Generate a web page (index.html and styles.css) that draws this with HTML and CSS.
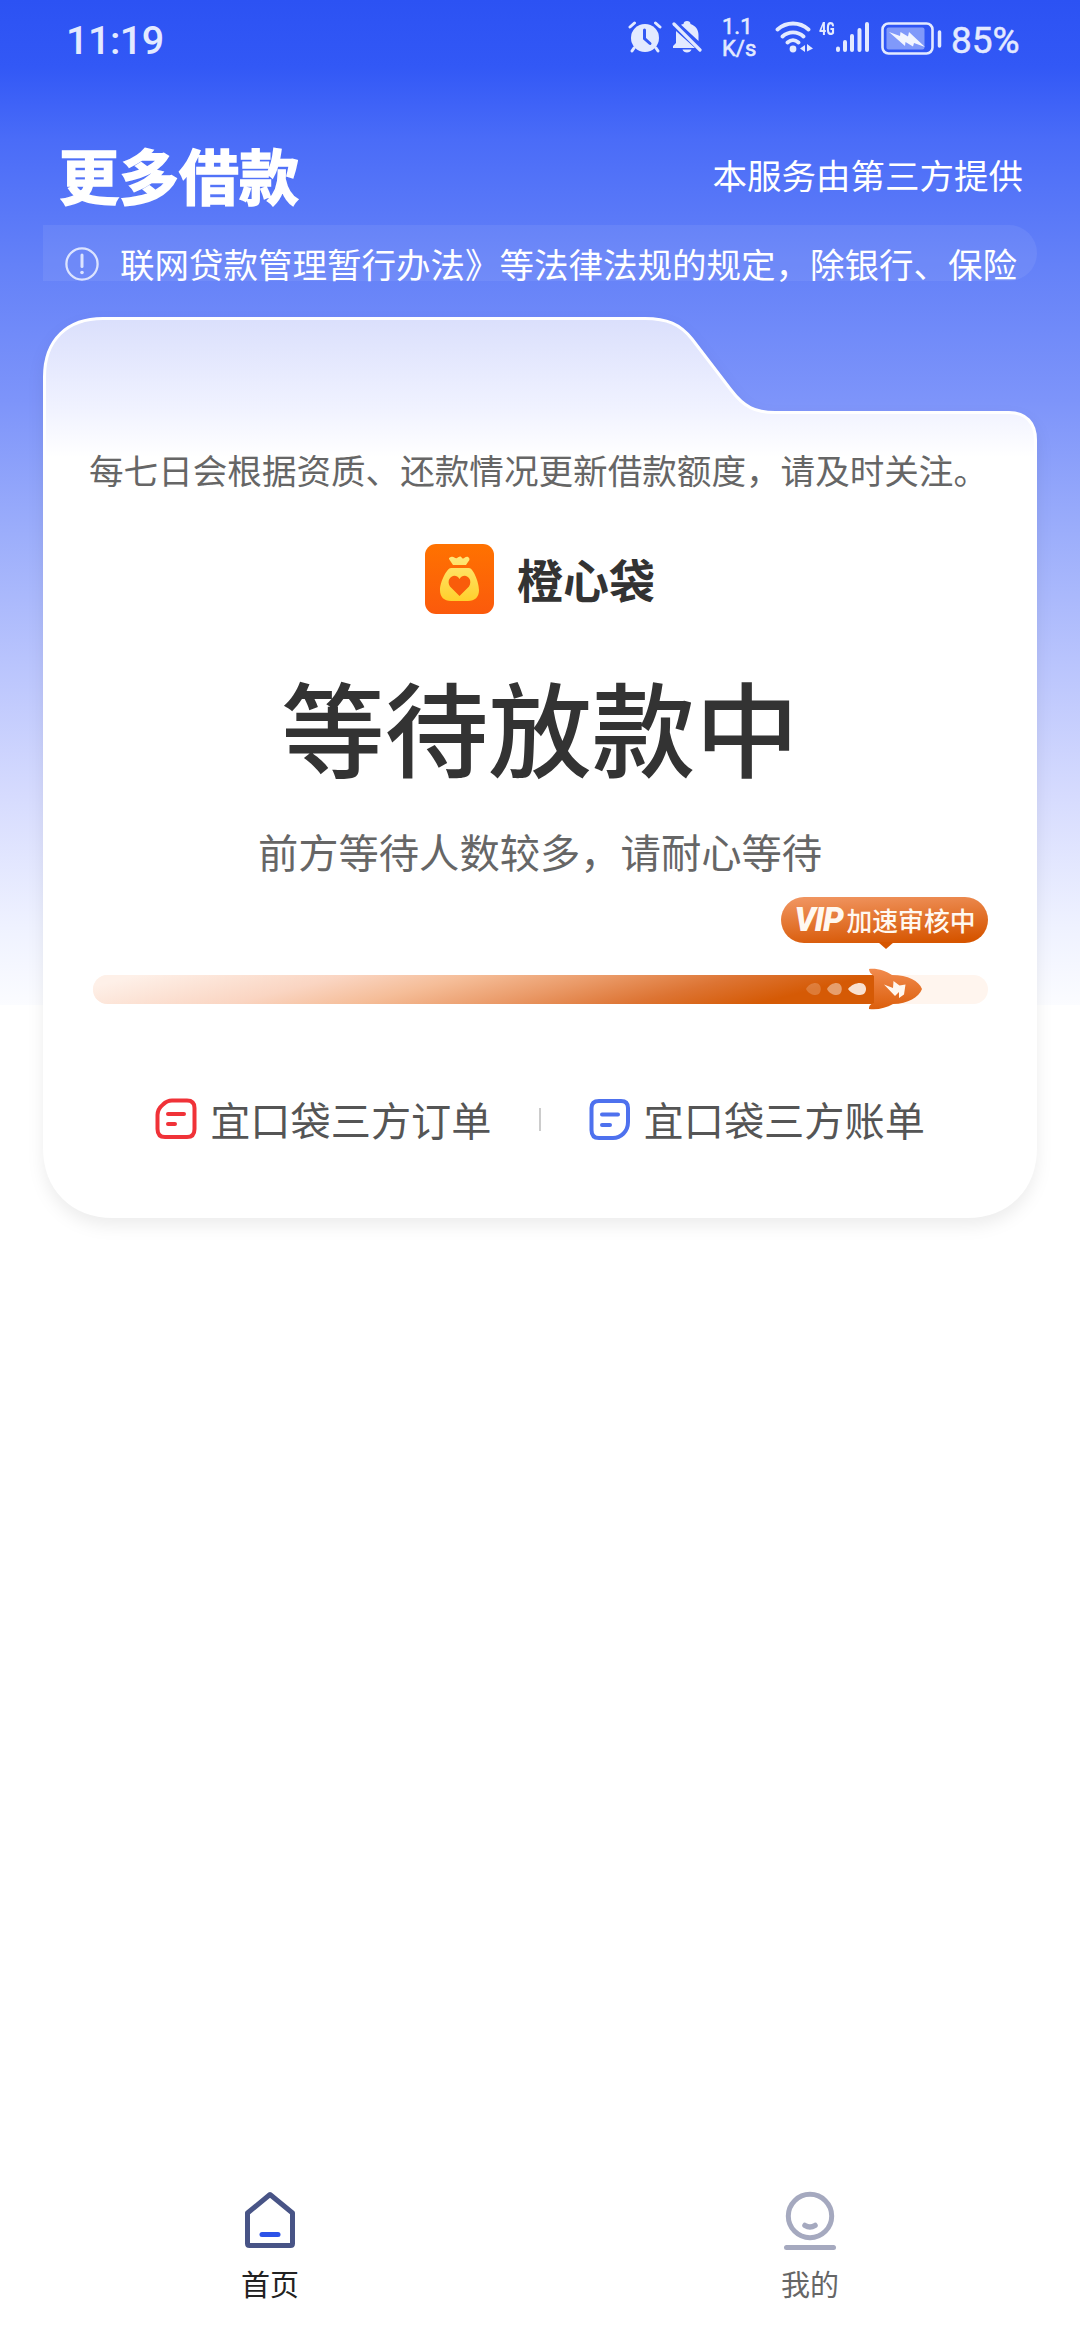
FILE: index.html
```
<!DOCTYPE html>
<html lang="zh-CN">
<head>
<meta charset="utf-8">
<title>更多借款</title>
<link rel="stylesheet" href="styles.css">
</head>
<body>
<div class="screen">
  <header class="status">
    <span class="time">11:19</span>
    <div class="status-right">
      <svg class="ic-alarm" width="34" height="32" viewBox="0 0 34 32" fill="none" stroke="#e3eaff" stroke-width="3" stroke-linecap="round"><circle cx="17" cy="17" r="14" fill="#e3eaff" stroke="none"/><path d="M2 6L6.500 2M32 6L27.500 2M6 27l-2 3M28 27l2 3"/><path d="M16.500 9v8.500l5.500 5" stroke="#3459f4"/></svg>
      <svg class="ic-bell" width="30" height="32" viewBox="0 0 30 32"><path d="M15 0c2 0 3.500 1.300 3.500 3 5 1.800 8 5.500 8 11v6L9 3.800c.8-.5 1.500-.6 2.500-.8C11.500 1.300 13 0 15 0zM4 10l19 17H1v-2l3-3zM10.500 28.500h9c-.5 2-2.500 3-4.500 3s-4-1-4.500-3z" fill="#e3eaff"/><path d="M3.500 1.500L29 26" stroke="#3459f4" stroke-width="2"/><path d="M2 3l26 26" stroke="#e3eaff" stroke-width="3.200" stroke-linecap="round"/></svg>
      <span class="speed"><span>1.1</span><span>K/s</span></span>
      <svg class="ic-wifi" width="38" height="32" viewBox="0 0 38 32" fill="none" stroke="#e3eaff" stroke-width="3.800" stroke-linecap="round"><path d="M2.500 8.500c9-8 22-8 31 0M7.500 15.500c6-5.500 15-5.500 21 0M12.500 21.500c3.500-3 7.500-3 11 0"/><circle cx="18" cy="28" r="3.400" fill="#e3eaff" stroke="none"/><path d="M30 24v7l-5-3.500zM32 23l6 4.500-6 3z" fill="#e3eaff" stroke="none"/></svg>
      <span class="net">4G</span>
      <svg class="ic-signal" width="33" height="32" viewBox="0 0 33 32" stroke="#e3eaff" stroke-width="4" stroke-linecap="round"><path d="M2 27.500v1.500M9 21v8M16 15v14M23.500 9v20M31 3v26"/></svg>
      <svg class="ic-battery" width="61" height="34" viewBox="0 0 61 34"><rect x="1.500" y="1.500" width="50" height="30" rx="6" fill="none" stroke="#e3eaff" stroke-width="2.600"/><rect x="5.500" y="5.500" width="38" height="22" rx="2" fill="#8099fa"/><path d="M8 10l11 4 .5-4 7.500 4.500 1-4.500 16 15-11-4-1 3.500-7.500-4.500-.5 4z" fill="#f2f5ff"/><path d="M58.500 10v14" stroke="#e3eaff" stroke-width="3.500" stroke-linecap="round"/></svg>
      <span class="percent">85%</span>
    </div>
  </header>

  <div class="heading">
    <h1>更多借款</h1>
    <span class="provider">本服务由第三方提供</span>
  </div>

  <div class="notice">
    <svg width="34" height="36" viewBox="0 0 34 36" fill="none" stroke="#dce4ff" stroke-width="2.300" stroke-linecap="round"><circle cx="17" cy="18" r="15.600"/><path d="M17 9v11.500" stroke-width="3"/><circle cx="17" cy="26.500" r="1.800" fill="#dce4ff" stroke="none"/></svg>
    <span>联网贷款管理暂行办法》等法律法规的规定，除银行、保险</span>
  </div>

  <main class="card">
    <svg class="card-shape" width="994" height="901" viewBox="0 0 994 901">
      <defs><linearGradient id="tab" x1="0" y1="0" x2="0" y2="140" gradientUnits="userSpaceOnUse"><stop offset="0" stop-color="#dadffc"/><stop offset=".65" stop-color="#f0f2ff"/><stop offset="1" stop-color="#fff"/></linearGradient></defs>
      <path d="M1.500 60C1.500 22 25 1.500 60 1.500H602C624 1.500 637 7 649 22L688 73C701 90 712 95.500 732 95.500H966C983 95.500 992.500 106 992.500 123V830C992.500 872 965 899.500 924 899.500H70C29 899.500 1.500 872 1.500 830Z" fill="url(#tab)" stroke="#fff" stroke-width="3"/>
    </svg>
    <div class="card-body">
      <p class="tip">每七日会根据资质、还款情况更新借款额度，请及时关注。</p>
      <div class="brand">
        <svg width="69" height="70" viewBox="0 0 69 70">
          <defs><linearGradient id="logo" x1="0" y1="0" x2="0" y2="1"><stop offset="0" stop-color="#ff7200"/><stop offset="1" stop-color="#fb5a0c"/></linearGradient><linearGradient id="bag" x1="0" y1="0" x2="0" y2="1"><stop offset="0" stop-color="#ffe878"/><stop offset="1" stop-color="#ffd02c"/></linearGradient></defs>
          <rect width="69" height="70" rx="11" fill="url(#logo)"/>
          <path d="M26 13c3-1 4 2 6 1 2-1 3-3 5 0 2 2 3-2 6-1 2 1 2 3 0 5l-2 3H28l-4-6c-.5-1 1-2 2-2zM26 24h18c4 0 10 14 10 22 0 7-4 11-11 11H26c-7 0-11-4-11-11 0-8 7-22 11-22z" fill="url(#bag)"/>
          <path d="M34.500 52L25 42.500c-5-8 5-15 9.500-7.500 4.500-7.500 14.500-.5 9.500 7.500z" fill="#f95c0b"/>
        </svg>
        <strong>橙心袋</strong>
      </div>
      <h2>等待放款中</h2>
      <p class="waiting">前方等待人数较多，请耐心等待</p>
      <div class="progress">
        <div class="bubble"><i>VIP</i><span>加速审核中</span></div>
        <div class="track"><div class="fill"></div></div>
        <svg class="rocket" width="122" height="42" viewBox="0 0 122 42">
          <defs><linearGradient id="rk" x1="0" y1="0" x2="0" y2="1"><stop offset="0" stop-color="#f18b4e"/><stop offset="1" stop-color="#dc5f0c"/></linearGradient></defs>
          <g fill="#fff"><path opacity=".2" d="M5 21c2-4 6-6 9.500-6 7 0 7 12 0 12-3.500 0-7.500-2-9.500-6z"/><path opacity=".42" d="M26 21c2-4 6-6 9.500-6 7 0 7 12 0 12-3.500 0-7.500-2-9.500-6z"/><path opacity=".82" d="M47 21c3-4 8-6 12-6 8 0 8 12 0 12-4 0-9-2-12-6z"/></g>
          <path d="M68 1c8-1 17 2 23 6 16 0 27 6 30 14-3 8-14 15-29 15-7 4-15 6-24 5 0-4 2-5 5-6V8c-3-2-5-4-5-7z" fill="url(#rk)"/>
          <path d="M83 16.500l9 3.500.5-7 6 4.500 6-1-1.500 10-5 3.500v-6l-4 4z" fill="#fff8f0"/>
        </svg>
      </div>
      <nav class="links">
        <a><svg width="42" height="42" viewBox="0 0 42 42" fill="none" stroke="#f03238" stroke-width="4" stroke-linecap="round"><path d="M17 2.500H32Q39.500 2.500 39.500 10V31Q39.500 39 32 39H10Q2.500 39 2.500 31V17Q2.500 11 8 6.500Q12 2.500 17 2.500ZM13 16H29M13 26H20"/></svg><span>宜口袋三方订单</span></a>
        <b class="sep"></b>
        <a><svg width="42" height="42" viewBox="0 0 42 42" fill="none" stroke="#4e71ee" stroke-width="4" stroke-linecap="round"><path d="M10 3H32Q39 3 39 10V24Q39 31 34.500 35.500Q30 40 24 40H10Q2.500 40 2.500 32V10Q2.500 3 10 3ZM13 16.500H29M13 27H21"/></svg><span>宜口袋三方账单</span></a>
      </nav>
    </div>
  </main>

  <footer class="tabs">
    <a class="on"><svg width="56" height="62" viewBox="0 0 56 62" fill="none" stroke="#485486" stroke-width="5" stroke-linejoin="round" stroke-linecap="round"><path d="M28 5.500L50.500 24V54.500Q50.500 56.500 48.500 56.500H7.500Q5.500 56.500 5.500 54.500V24Z"/><path d="M20 45.500H36" stroke="#2c52e8" stroke-width="5"/></svg><span>首页</span></a>
    <a><svg width="56" height="62" viewBox="0 0 56 62" fill="none" stroke="#a5a9bf" stroke-width="5" stroke-linecap="round"><circle cx="28" cy="27" r="21.700"/><path d="M23 36.500Q28 39.500 33 36.500" stroke-width="5.500"/><path d="M4.500 58.500H51.500"/></svg><span>我的</span></a>
  </footer>
</div>
</body>
</html>
```
FILE: styles.css
```
* { box-sizing: border-box; margin: 0; padding: 0; }
body { background: #fff; font-family: "Noto Sans CJK SC", sans-serif; }
.screen {
  position: relative; width: 1080px; height: 2340px; overflow: hidden;
  display: flex; flex-direction: column;
  background: linear-gradient(#2c52f3 0, #3258f6 66px, #4a6cf8 140px, #6481f8 265px, #7d94fa 400px, #9badfb 530px, #b9c4fd 663px, #d6dbfe 796px, #eff2ff 928px, #fbfcff 1005px) no-repeat 0 0 / 100% 1005px, #fff;
}
.status { height: 80px; padding: 0 60px 0 66px; display: flex; justify-content: space-between; color: #e3eaff; font-family: Roboto, sans-serif; }
.time { font: 500 39.500px/82px Roboto, sans-serif; letter-spacing: -.5px; }
.status-right { display: flex; align-items: flex-start; padding-top: 21px; }
.status-right svg { flex: none; }
.ic-bell { margin-left: 10px; }
.speed { display: flex; flex-direction: column; width: 36px; margin: -5px 0 0 20px; font: 400 22px/22px Roboto, sans-serif; -webkit-text-stroke: .6px #e3eaff; }
.ic-wifi { margin-left: 17px; }
.net { font: 700 18.500px/16px "Roboto Condensed", Roboto, sans-serif; width: 18px; margin-left: 6px; transform: scaleX(.78); transform-origin: 0 50%; white-space: nowrap; }
.ic-signal { margin-left: -1px; }
.ic-battery { margin: 1px 0 0 12px; }
.percent { font: 400 37px/40px Roboto, sans-serif; width: 69px; margin-left: 9px; -webkit-text-stroke: .5px #e3eaff; }
.heading { height: 145px; padding: 42px 57px 0 59px; display: flex; justify-content: space-between; align-items: center; color: #fff; }
h1 { font-size: 60px; line-height: 80px; font-weight: 700; -webkit-text-stroke: 1.500px #fff; }
.provider { font-size: 34.500px; }
.notice { margin: 0 43px; height: 56px; border-radius: 0 28px 28px 0; background: rgba(255,255,255,.07); padding: 21px 0 0 22px; display: flex; gap: 21px; color: #fff; white-space: nowrap; }
.notice svg { flex: none; }
.notice span { font-size: 34.500px; line-height: 35px; }
.card { position: relative; margin: 36px 43px 0; height: 901px; }
.card-shape { position: absolute; left: 0; top: 0; filter: drop-shadow(0 8px 8px rgba(0,0,0,.07)); }
.card-body { position: relative; display: flex; flex-direction: column; align-items: center; padding-top: 127px; }
.tip { font-size: 34.600px; line-height: 50px; color: #666; align-self: flex-start; padding-left: 46px; white-space: nowrap; }
.brand { display: flex; align-items: center; gap: 23px; margin-top: 50px; height: 70px; }
.brand strong { font-size: 46px; line-height: 68px; color: #333; margin-top: -2px; }
h2 { font-size: 103.500px; line-height: 120px; font-weight: 500; color: #333; margin-top: 51px; }
.waiting { font-size: 40.300px; line-height: 50px; color: #666; margin-top: 41px; }
.progress { position: relative; width: 895px; margin-top: 21px; display: flex; flex-direction: column; align-items: flex-end; }
.bubble { position: relative; width: 207px; height: 46px; border-radius: 23px; background: linear-gradient(176deg, #f0945f 5%, #d65500 92%); color: #fff8f0; display: flex; align-items: center; padding-left: 14px; }
.bubble::after { content: ""; position: absolute; left: 97px; top: 45px; border: 8px solid transparent; border-top: 7px solid #d65500; border-bottom: 0; }
.bubble i { font: italic 900 33px/48px Roboto, sans-serif; width: 52px; letter-spacing: -1.200px; }
.bubble span { font-size: 25.800px; line-height: 46px; font-weight: 500; }
.track { width: 895px; height: 29px; margin-top: 32px; border-radius: 15px; background: #fff5ee; }
.fill { width: 790px; height: 29px; border-radius: 15px 0 0 15px; background: linear-gradient(166deg, #fef0e8 5%, #fad5c2 28%, #f5bd98 42%, #ea9a68 57%, #dd7433 72%, #d55a05 86%); }
.rocket { position: absolute; left: 708px; top: 71px; }
.links { display: flex; align-items: center; margin-top: 87px; height: 56px; color: #555; }
.links a { display: flex; align-items: center; gap: 13px; }
.links span { font-size: 40.200px; line-height: 56px; }
.sep { width: 2px; height: 23px; background: #ccc; margin: 0 48px 0 47px; }
.tabs { margin-top: auto; height: 151px; display: flex; }
.tabs a { flex: 1; display: flex; flex-direction: column; align-items: center; font-size: 29px; color: #666; }
.tabs .on { color: #222; }
.tabs span { line-height: 40px; margin-top: 12px; }
```
